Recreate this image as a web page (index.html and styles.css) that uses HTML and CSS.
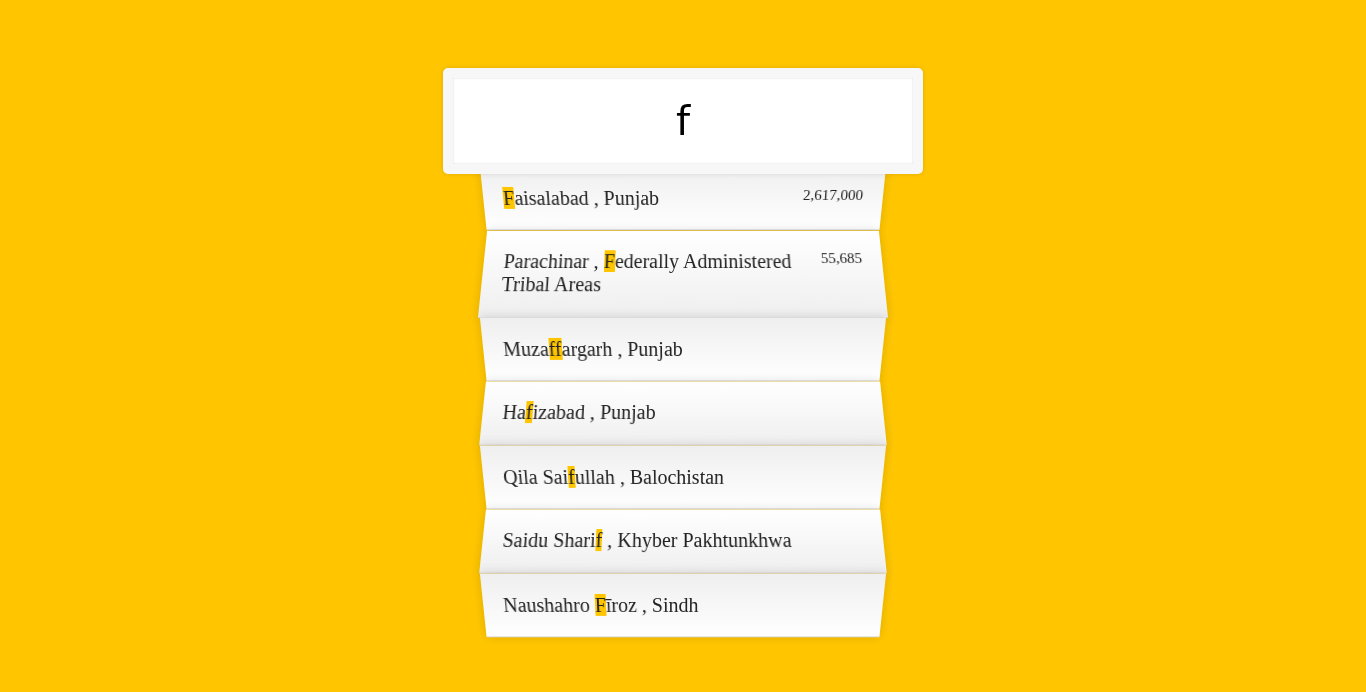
FILE: index.html
```html
<!DOCTYPE html>
<html lang="en">
<head>
<meta charset="UTF-8">
<title>Type Ahead</title>
<link rel="stylesheet" href="styles.css">
</head>
<body>
<form class="search-form">
  <input type="text" class="search" placeholder="City or State" value="f">
  <ul class="suggestions">
    <li><span class="name"><span class="hl">F</span>aisalabad , Punjab</span><span class="population">2,617,000</span></li>
    <li><span class="name">Parachinar , <span class="hl">F</span>ederally Administered Tribal Areas</span><span class="population">55,685</span></li>
    <li><span class="name">Muza<span class="hl">ff</span>argarh , Punjab</span><span class="population"></span></li>
    <li><span class="name">Ha<span class="hl">f</span>izabad , Punjab</span><span class="population"></span></li>
    <li><span class="name">Qila Sai<span class="hl">f</span>ullah , Balochistan</span><span class="population"></span></li>
    <li><span class="name">Saidu Shari<span class="hl">f</span> , Khyber Pakhtunkhwa</span><span class="population"></span></li>
    <li><span class="name">Naushahro <span class="hl">F</span>īroz , Sindh</span><span class="population"></span></li>
  </ul>
</form>
</body>
</html>
```

FILE: styles.css
```css
html {
  box-sizing: border-box;
  background: #ffc600;
  font-family: "Liberation Serif", "Times New Roman", serif;
  font-size: 20px;
  font-weight: 200;
}

*, *::before, *::after {
  box-sizing: inherit;
}

body {
  margin: 8px;
}

.search-form {
  max-width: 400px;
  margin: 50px auto;
}

.search {
  display: block;
  position: relative;
  top: 10px;
  z-index: 2;
  width: 480px;
  margin: 0 0 0 -40px;
  padding: 20px;
  text-align: center;
  outline: 0;
  border: 10px solid #f7f7f7;
  border-radius: 5px;
  font-family: "DejaVu Sans", sans-serif;
  font-size: 40px;
  color: #000;
  background: #fff;
  box-shadow: 0 0 5px rgba(0, 0, 0, 0.12), inset 0 0 2px rgba(0, 0, 0, 0.19);
}

.suggestions {
  margin: 0;
  padding: 0;
  position: relative;
}

.suggestions li {
  list-style: none;
  border-bottom: 1px solid #d8d8d8;
  box-shadow: 0 0 10px rgba(0, 0, 0, 0.14);
  margin: 0;
  padding: 20px;
  display: flex;
  justify-content: space-between;
  color: #222;
}

.suggestions li:nth-child(even) {
  transform: perspective(100px) rotateX(3deg) translateY(2px) scale(1.001);
  background: linear-gradient(to bottom, #ffffff 0%, #efefef 100%);
}

.suggestions li:nth-child(odd) {
  transform: perspective(100px) rotateX(-3deg) translateY(3px);
  background: linear-gradient(to top, #ffffff 0%, #efefef 100%);
}

.population {
  font-size: 15px;
  flex-shrink: 0;
  margin-left: 20px;
}

.hl {
  background: #ffc600;
}
```
